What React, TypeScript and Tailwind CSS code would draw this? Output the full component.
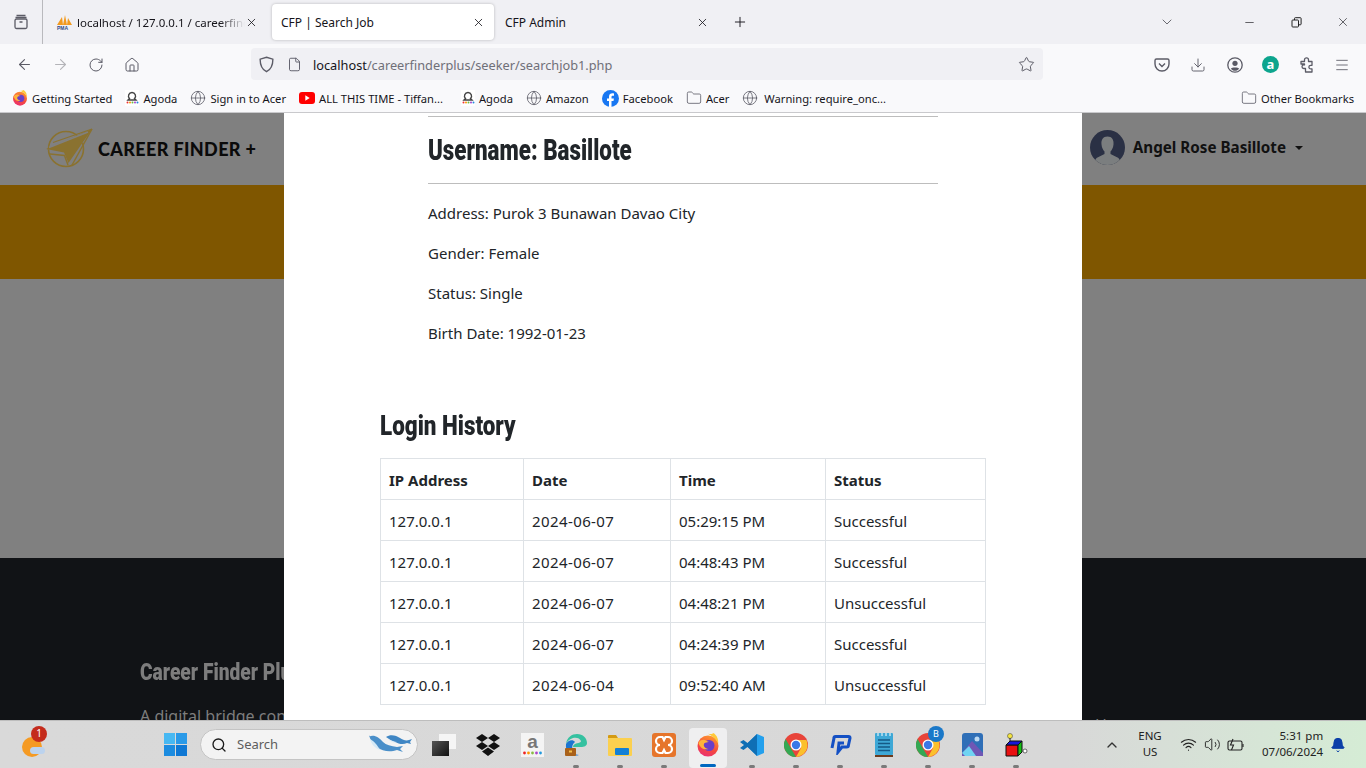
import { ArrowLeft, ArrowRight, RotateCw, Home, File, Star, Download, Menu, Folder, Globe, X, Plus, ChevronDown, Minus, Search, ChevronUp, Wifi, Volume2, Bell } from "lucide-react"

const ui = "font-['Noto_Sans','Open_Sans',sans-serif]"
const heading = "font-['Roboto',sans-serif] font-black whitespace-nowrap origin-left"

const rows = [
    ["127.0.0.1", "2024-06-07", "05:29:15 PM", "Successful"],
    ["127.0.0.1", "2024-06-07", "04:48:43 PM", "Successful"],
    ["127.0.0.1", "2024-06-07", "04:48:21 PM", "Unsuccessful"],
    ["127.0.0.1", "2024-06-07", "04:24:39 PM", "Successful"],
    ["127.0.0.1", "2024-06-04", "09:52:40 AM", "Unsuccessful"],
]

const FirefoxIcon = ({ size = 16 }: { size?: number }) => (
    <svg width={size} height={size} viewBox="0 0 24 24">
        <defs>
            <linearGradient id="ffBody" x1="0.700" y1="0" x2="0.300" y2="1">
                <stop offset="0" stopColor="#ff9a2e" />
                <stop offset="0.600" stopColor="#f4483f" />
                <stop offset="1" stopColor="#ea2f74" />
            </linearGradient>
        </defs>
        <circle cx="12" cy="13" r="10.500" fill="url(#ffBody)" />
        <path d="M12 .8c4 2 8 5 10.200 9.700.3-4-1-8-4.700-10.500 0 0-1.500 1.800-5.500.8z" fill="#ffc93a" />
        <circle cx="13" cy="12.500" r="5.500" fill="#6a3fc8" />
        <path d="M2.500 10c1-2.500 3-3.500 5.500-3.300 2.500.2 2.500 2 5 2.100-2 1.200-4 .2-5 2.200-1 2 1 4.300 4.500 5-4.500 1.200-8.500-1-10-6z" fill="#ffb43a" />
    </svg>
)

const PmaIcon = () => (
    <svg width="17" height="16" viewBox="0 0 17 16">
        <path d="M1 11 6 3l1 8zM7 11l2-10 2 10zM11 11l1-7 4 7z" fill="#f29a1f" />
        <text x="1" y="15.500" fontSize="5" fontWeight="700" fill="#2f4a87" fontFamily="Liberation Sans">PMA</text>
    </svg>
)

const PocketIcon = () => (
    <svg width="16" height="16" viewBox="0 0 16 16" fill="none" stroke="#5b5b66" strokeWidth="1.400">
        <path d="M2.500 2h11A1.500 1.500 0 0 1 15 3.500V7A7 7 0 0 1 1 7V3.500A1.500 1.500 0 0 1 2.500 2z" />
        <path d="m5 6.500 3 3 3-3" />
    </svg>
)

const AccountIcon = () => (
    <svg width="16" height="16" viewBox="0 0 16 16">
        <circle cx="8" cy="8" r="7.200" fill="none" stroke="#5b5b66" strokeWidth="1.300" />
        <circle cx="8" cy="6.300" r="2.600" fill="#5b5b66" />
        <path d="M3.800 11.500c1-1.500 7.400-1.500 8.400 0-1 1.600-2.500 2.300-4.200 2.300s-3.200-.7-4.200-2.300z" fill="#5b5b66" />
    </svg>
)

const ExtensionIcon = () => (
    <svg width="17" height="18" viewBox="0 0 17 18" fill="none" stroke="#5b5b66" strokeWidth="1.300" strokeLinejoin="round">
        <path d="M3 5.500h3.500V3.800a2 2 0 1 1 4 0v1.700H14v3.800h-1.300a1.800 1.800 0 1 0 0 3.600H14V16H7.500v-3.500H5.800a1.800 1.800 0 1 1 0-3.600h.7V8H3z" />
    </svg>
)

const ShieldIcon = () => (
    <svg width="17" height="17" viewBox="0 0 16 16" fill="none" stroke="#5b5b66" strokeWidth="1.300">
        <path d="M8 1.200 14 3c0 6-1.500 9.500-6 11.800C3.500 12.500 2 9 2 3z" />
    </svg>
)

const ColumnsIcon = () => (
    <svg width="16" height="16" viewBox="0 0 16 16" fill="none" stroke="#5b5b66" strokeWidth="1.300">
        <rect x="2" y="5" width="12" height="9.500" rx="1.500" />
        <path d="M3.500 1.500h9M2.500 3.500h11M6.500 8h3" />
    </svg>
)

const RestoreIcon = () => (
    <svg width="11" height="11" viewBox="0 0 11 11" fill="none" stroke="#222" strokeWidth="1">
        <rect x="1" y="3" width="6.500" height="7" rx="0.800" />
        <path d="M3.500 3V1.500a.800.800 0 0 1 .800-.800h5a.800.800 0 0 1 .800.800V7a.800.800 0 0 1-.800.800H7.500" />
    </svg>
)

const AgodaIcon = () => (
    <svg width="14" height="16" viewBox="0 0 14 16">
        <rect width="14" height="16" fill="#fff" />
        <path d="M7 2.500a3.500 3.500 0 0 1 2.500 6L11 10H3l1.500-1.500A3.500 3.500 0 0 1 7 2.500z" fill="none" stroke="#444" strokeWidth="1.400" />
        <circle cx="2.500" cy="12.500" r="1" fill="#e33" /><circle cx="5" cy="12.500" r="1" fill="#f90" /><circle cx="7.500" cy="12.500" r="1" fill="#6b4" /><circle cx="10" cy="12.500" r="1" fill="#a4c" /><circle cx="12.500" cy="12.500" r="1" fill="#28d" />
    </svg>
)

const YoutubeIcon = () => (
    <svg width="16" height="12" viewBox="0 0 16 12">
        <rect width="16" height="12" rx="3" fill="#f00" />
        <path d="m6.300 3.300 4.400 2.700-4.400 2.700z" fill="#fff" />
    </svg>
)

const FacebookIcon = () => (
    <svg width="17" height="17" viewBox="0 0 17 17">
        <circle cx="8.500" cy="8.500" r="8.500" fill="#1877f2" />
        <path d="M9.500 17v-6h2l.400-2.500H9.500V7c0-.800.400-1.300 1.400-1.300H12V3.500c-2.500-.500-5 0-5 3.200v1.800H5V11h2v6z" fill="#fff" />
    </svg>
)

const Mark = ({ children, label, className = "gap-[4px]" }: { children: React.ReactNode; label: string; className?: string }) => (
    <div className={`flex items-center ${className}`}>
        {children}
        <span className="whitespace-nowrap pt-[2px]">{label}</span>
    </div>
)

const Logo = () => (
    <svg width="48" height="42" viewBox="5 6 48 42" fill="none">
        <circle cx="26" cy="27" r="17.500" stroke="#8a7230" strokeWidth="1.600" />
        <path d="M52 7 7 27l17 4.500L28 42z" fill="#808080" />
        <path d="M52 7 6 27l18 3.500L28.500 41z" fill="#8a7230" />
        <path d="M52 7 13 20.500" stroke="#8a7230" strokeWidth="1.200" />
        <path d="M48 10 9 25.500" stroke="#808080" strokeWidth="1.500" />
        <path d="M52 7 31.500 44" stroke="#8a7230" strokeWidth="1.500" />
        <path d="M10 32l14.500 1.500L28 43" stroke="#8a7230" strokeWidth="1.500" />
    </svg>
)

const Avatar = () => (
    <svg width="35" height="35" viewBox="0 0 35 35">
        <circle cx="17.500" cy="17.500" r="17.500" fill="#2a3044" />
        <clipPath id="avatar"><circle cx="17.500" cy="17.500" r="17.500" /></clipPath>
        <g clipPath="url(#avatar)" fill="#7b7e7f">
            <path d="M17.500 6.500c4.500 0 6.500 3.500 6 8-.3 3-1.500 5.500-3 7v2.500l7 3.500c1.500.8 3 2.500 3.500 7.500H4c.5-5 2-6.700 3.500-7.500l7-3.500v-2.500c-1.500-1.500-2.700-4-3-7-.5-4.500 1.500-8 6-8z" />
        </g>
    </svg>
)

const Edge = () => (
    <svg width="24" height="24" viewBox="0 0 24 24">
        <path d="M2 11C3 4 8 1 13 1c6 0 10 4 10 9 0 3-3 4-6 4H9c0-5 8-3 8-6-1-3-5-4-8-3-3 1-6 3-7 6z" fill="#35c1a0" />
        <path d="M2 11c2-4 7-5 9-2-3 2-4 7-1 11 1 1 3 2 5 2C8 24 1 20 2 11z" fill="#1b75d0" />
        <rect x="1" y="15" width="11" height="8" rx="1" fill="#a9611a" />
        <rect x="5" y="17.500" width="3" height="2" fill="#f3c04c" />
    </svg>
)

const FolderColor = () => (
    <svg width="24" height="22" viewBox="0 0 24 22">
        <path d="M0 2a1 1 0 0 1 1-1h7l2 3H0z" fill="#d49a12" />
        <rect y="4" width="24" height="18" rx="1" fill="#fbd04f" />
        <rect x="7" y="14" width="14" height="7" rx="1" fill="#1380d6" />
    </svg>
)

const Xampp = () => (
    <svg width="24" height="24" viewBox="0 0 24 24" fill="none">
        <rect width="24" height="24" rx="3" fill="#e6752b" />
        <path d="M8 4h2.500L12 7l1.500-3H16a4 4 0 0 1 0 8 4 4 0 0 1 0 8h-2.500L12 17l-1.500 3H8a4 4 0 0 1 0-8 4 4 0 0 1 0-8z" stroke="#fff" strokeWidth="2.200" />
    </svg>
)

const Vscode = () => (
    <svg width="24" height="24" viewBox="0 0 24 24">
        <path d="M17 1 24 4v16l-7 3L6 12z" fill="#24a0ed" />
        <path d="M17 1v22L7.500 14l-4 3L0 15l4-3-4-3 3.500-2 4 3z" fill="#0f6fb5" />
    </svg>
)

const ChromeIcon = ({ size = 24 }: { size?: number }) => (
    <svg width={size} height={size} viewBox="0 0 24 24">
        <circle cx="12" cy="12" r="12" fill="#e8443a" />
        <path d="M1.600 6 12 24a12 12 0 0 1-10.400-18z" fill="#34a853" />
        <path d="M12 7h10.400A12 12 0 0 1 12 24l5-9z" fill="#fbc02d" />
        <circle cx="12" cy="12" r="5.500" fill="#fff" />
        <circle cx="12" cy="12" r="4.200" fill="#3b78e7" />
    </svg>
)

const ChatBlue = () => (
    <svg width="23" height="20" viewBox="0 0 23 20" fill="none" stroke="#1450c4" strokeWidth="3">
        <path d="M3 13 5 3a1.500 1.500 0 0 1 1.500-1.500h13A1.500 1.500 0 0 1 21 3l-1.500 7a2 2 0 0 1-2 2H13l-4 5 1-9h5" />
    </svg>
)

const Notepad = () => (
    <svg width="18" height="24" viewBox="0 0 18 24">
        <rect width="18" height="22" y="0" rx="1" fill="#3ea8d6" />
        <rect y="22" width="18" height="2" fill="#6b3b1e" />
        <path d="M3 7h12M3 10.500h12M3 14h12M3 17.500h12" stroke="#155a86" strokeWidth="1.500" />
        <path d="M3 0v3M7 0v3M11 0v3M15 0v3" stroke="#fff" strokeWidth="1" />
    </svg>
)

const Photos = () => (
    <svg width="21" height="23" viewBox="0 0 21 23">
        <rect width="21" height="23" rx="3" fill="#2f6fb7" />
        <circle cx="15" cy="6" r="2.500" fill="#bcd9f2" />
        <path d="M0 20 10 8l11 12v3H0z" fill="#6f57b5" />
        <path d="M0 20 7 13l7 10H3z" fill="#6fd3f2" />
    </svg>
)

const Cube = () => (
    <svg width="24" height="24" viewBox="0 0 24 24">
        <circle cx="6" cy="3" r="2.500" fill="#f5e642" stroke="#333" strokeWidth="0.500" />
        <path d="M6 5v5" stroke="#222" />
        <path d="M2 12h12v11H2z" fill="#e81010" stroke="#111" />
        <path d="M2 12l4-4h12l-4 4z" fill="#1616d8" stroke="#111" />
        <path d="M14 12l4-4v11l-4 4z" fill="#16c016" stroke="#111" />
        <circle cx="21" cy="18" r="2" fill="#fff" stroke="#333" strokeWidth="0.700" />
    </svg>
)

const Dropbox = () => (
    <svg width="24" height="22" viewBox="0 0 24 22" fill="#111">
        <path d="M6 0 0 4l6 4 6-4zM18 0l-6 4 6 4 6-4zM0 12l6 4 6-4-6-4zM24 12l-6 4-6-4 6-4zM6 17.500 12 22l6-4.500-6-4z" />
    </svg>
)

const Amazon = () => (
    <svg width="23" height="24" viewBox="0 0 23 24">
        <rect width="23" height="24" fill="#f4f4f4" />
        <text x="11.500" y="15" textAnchor="middle" fontSize="19" fontWeight="700" fill="#777" fontFamily="Liberation Sans">a</text>
        <circle cx="3.500" cy="20" r="1.400" fill="#e22" /><circle cx="7.500" cy="20" r="1.400" fill="#f90" /><circle cx="11.500" cy="20" r="1.400" fill="#8b4" /><circle cx="15.500" cy="20" r="1.400" fill="#a4c" /><circle cx="19.500" cy="20" r="1.400" fill="#29d" />
    </svg>
)

const Whales = () => (
    <svg width="46" height="24" viewBox="8 8 46 24" className="ml-auto">
        <path d="M27 12c4-3 10-2 14 1 3 2 6 3 9 2l3-1-2 3 1 2-4-1c-4 2-8 1-12-1-3-1-6-3-9-5z" fill="#3f86c4" />
        <path d="M10 12C14 9 20 12 24 17c3 3 8 4 14 5l6-1-3 3 3 3-6-2c-6 2-14 2-20-3-4-3-7-7-8-12z" fill="#4a8fc9" />
        <path d="M11 14c1 5 5 9 10 11-2-4-6-9-10-11z" fill="#d5e9f6" />
        <path d="M29 14c3 2 6 3 9 3-3 1-6 0-9-3z" fill="#d5e9f6" />
    </svg>
)

const TaskIcon = ({ children, active, dot = true }: { children: React.ReactNode; active?: boolean; dot?: boolean }) => (
    <div className="relative flex h-[38px] w-9 items-center justify-center">
        {active && <span className="absolute inset-x-[-1px] bottom-[-4px] top-[2px] rounded-[4px] bg-[#efeff0]" />}
        <div className="relative flex items-center justify-center">{children}</div>
        {dot && !active && <span className="absolute bottom-[-4px] h-[3px] w-[6px] rounded-full bg-[#7a7a7a]" />}
        {active && <span className="absolute bottom-[-3px] h-[3px] w-[16px] rounded-full bg-[#0067c0]" />}
    </div>
)

export default function App() {
    return (
        <div className={`flex h-[768px] w-[1366px] flex-col overflow-hidden bg-white ${ui}`}>
            <div className="flex h-[44px] shrink-0 items-center bg-[#f0f0f4] text-[12px] text-[#15141a]">
                <div className="flex h-full w-[43px] items-center justify-center border-r border-[#b9b9bd]">
                    <ColumnsIcon />
                </div>
                <div className="flex w-[229px] items-center pl-[13px]">
                    <PmaIcon />
                    <span className="ml-[4px] w-[168px] overflow-hidden whitespace-nowrap pt-[2px] text-[11.500px] [mask-image:linear-gradient(90deg,#000_85%,transparent)]">localhost / 127.0.0.1 / careerfinderplus</span>
                    <X size={13} strokeWidth={1.5} />
                </div>
                <div className="flex h-[36px] w-[222px] items-center justify-between rounded-[4px] bg-white pl-[9px] pr-[9px] shadow-[0_0_3px_rgba(0,0,0,0.25)]">
                    <span className="pt-[2px]">CFP | Search Job</span>
                    <X size={13} strokeWidth={1.5} />
                </div>
                <div className="flex w-[221px] items-center justify-between pl-[11px] pr-[6px]">
                    <span className="pt-[2px]">CFP Admin</span>
                    <X size={13} strokeWidth={1.5} />
                </div>
                <Plus size={16} strokeWidth={1.4} className="ml-[17px]" />
                <ChevronDown size={16} strokeWidth={1.3} className="ml-[411px] text-[#55555c]" />
                <Minus size={13} strokeWidth={1.2} className="ml-[68px]" />
                <div className="ml-[35px]"><RestoreIcon /></div>
                <X size={14} strokeWidth={1.1} className="ml-[34px]" />
            </div>

            <div className="flex h-[41px] shrink-0 items-center bg-[#f9f9fb] text-[#5b5b66]">
                <ArrowLeft size={17} strokeWidth={1.5} className="ml-[16px]" />
                <ArrowRight size={17} strokeWidth={1.5} className="ml-[19px] text-[#b4b4b8]" />
                <RotateCw size={16} strokeWidth={1.5} className="ml-[19px]" />
                <Home size={16} strokeWidth={1.5} className="ml-[20px]" />
                <div className="mb-[1px] ml-[111px] flex h-[32px] w-[792px] items-center rounded-[4px] bg-[#f0f0f4] pl-[7px] pr-[8px]">
                    <ShieldIcon />
                    <File size={15} strokeWidth={1.5} className="ml-[12px]" />
                    <span className="ml-[11px] pt-[4px] text-[12.750px]"><span className="text-[#15141a]">localhost</span><span className="text-[#6f6f78]">/careerfinderplus/seeker/searchjob1.php</span></span>
                    <Star size={17} strokeWidth={1.4} className="ml-auto" />
                </div>
                <div className="ml-[111px]"><PocketIcon /></div>
                <Download size={16} strokeWidth={1.4} className="ml-[20px]" />
                <div className="ml-[21px]"><AccountIcon /></div>
                <div className="ml-[19px] flex h-[17px] w-[17px] items-center justify-center rounded-full bg-[#0da58e] text-[13px] font-bold leading-none text-white">a</div>
                <div className="ml-[19px]"><ExtensionIcon /></div>
                <Menu size={16} strokeWidth={1.3} className="ml-[19px]" />
            </div>

            <div className="flex h-[28px] shrink-0 items-center border-b border-[#c9c9cc] bg-[#f9f9fb] pl-[12px] pr-[12px] text-[11.200px] text-[#15141a]">
                <div className="flex items-center gap-[13px]">
                    <Mark label="Getting Started"><FirefoxIcon /></Mark>
                    <Mark label="Agoda"><AgodaIcon /></Mark>
                    <Mark label="Sign in to Acer"><Globe size={16} strokeWidth={1.2} className="text-[#5b5b66]" /></Mark>
                    <Mark label="ALL THIS TIME - Tiffan..." className="mr-[5px] gap-[4px]"><YoutubeIcon /></Mark>
                    <Mark label="Agoda"><AgodaIcon /></Mark>
                    <Mark label="Amazon"><Globe size={16} strokeWidth={1.2} className="text-[#5b5b66]" /></Mark>
                    <Mark label="Facebook"><FacebookIcon /></Mark>
                    <Mark label="Acer"><Folder size={16} strokeWidth={1.2} className="text-[#5b5b66]" /></Mark>
                    <Mark label="Warning: require_onc..." className="gap-[6px]"><Globe size={16} strokeWidth={1.2} className="text-[#5b5b66]" /></Mark>
                </div>
                <div className="ml-auto">
                    <Mark label="Other Bookmarks"><Folder size={16} strokeWidth={1.2} className="text-[#5b5b66]" /></Mark>
                </div>
            </div>

            <div className="relative flex h-[607px] shrink-0 flex-col overflow-hidden bg-[#808080]">
                <div className="flex h-[72px] shrink-0 items-center justify-between bg-[#808080]">
                    <div className="ml-[45px] flex items-center gap-[5px]">
                        <Logo />
                        <span className="font-['Lato',sans-serif] text-[18px] font-black tracking-[0.370px] text-[#0a0a0a]">CAREER FINDER +</span>
                    </div>
                    <div className="mb-[3px] mr-[63px] flex items-center gap-[8px]">
                        <Avatar />
                        <span className="text-[15.200px] font-bold text-[#111]">Angel Rose Basillote</span>
                        <span className="ml-[1px] h-0 w-0 border-x-[4px] border-t-[4px] border-x-transparent border-t-[#111]" />
                    </div>
                </div>
                <div className="h-[94px] shrink-0 bg-[#7f5600]" />
                <div className="h-[279px] shrink-0" />
                <div className="flex h-[162px] shrink-0 bg-[#111316] text-[#7d7d7d]">
                    <div className="ml-[140px] w-[955px] pt-[97px]">
                        <h4 className={`${heading} scale-x-[0.8] text-[24px] leading-[34px]`}>Career Finder Plus</h4>
                        <p className="mt-[15px] whitespace-nowrap text-[16px]">A digital bridge connecting job seekers</p>
                    </div>
                    <p className="pt-[155px] text-[16px]">Home</p>
                </div>

                <div className="absolute inset-y-0 left-[284px] flex w-[798px] flex-col items-center bg-white text-[#212529]">
                    <div className="mt-[3px] w-[510px]">
                        <div className="h-px bg-[#bdbdbd]" />
                        <h2 className={`${heading} mt-[16px] scale-x-[0.745] text-[30px] leading-[34px]`}>Username: Basillote</h2>
                        <div className="mt-[16px] h-px bg-[#bdbdbd]" />
                        <div className="mt-[17px] flex flex-col gap-[16px] text-[15px] leading-[24px]">
                            <p>Address: Purok 3 Bunawan Davao City</p>
                            <p>Gender: Female</p>
                            <p>Status: Single</p>
                            <p>Birth Date: 1992-01-23</p>
                        </div>
                    </div>
                    <div className="mt-[64px] w-[606px]">
                        <h3 className={`${heading} scale-x-[0.8] text-[28px] leading-[34px]`}>Login History</h3>
                        <table className="mt-[15px] w-[605px] table-fixed border-collapse text-[15px]">
                            <colgroup>
                                <col className="w-[143px]" /><col className="w-[147px]" /><col className="w-[155px]" /><col className="w-[160px]" />
                            </colgroup>
                            <thead>
                                <tr className="h-[41px] text-left">
                                    {["IP Address", "Date", "Time", "Status"].map(h => (
                                        <th key={h} className="border border-[#dee2e6] px-[8px] pt-[2px] font-bold">{h}</th>
                                    ))}
                                </tr>
                            </thead>
                            <tbody>
                                {rows.map((row, i) => (
                                    <tr key={i} className="h-[41px]">
                                        {row.map((cell, j) => (
                                            <td key={j} className={`border border-[#dee2e6] px-[8px] pt-[2px] ${j === 1 ? "tracking-[0.400px]" : ""}`}>{cell}</td>
                                        ))}
                                    </tr>
                                ))}
                            </tbody>
                        </table>
                    </div>
                </div>
            </div>

            <div className="flex h-[48px] shrink-0 items-center border-t border-[#bdbdbd] bg-[linear-gradient(90deg,#d9d9d9_0%,#d8d8d8_78%,#d5ecd5_100%)]">
                <div className="relative ml-[22px] h-[22px] w-[22px]">
                    <div className="absolute left-0 top-[3px] h-[20px] w-[20px] rounded-full bg-[#f59a23]" />
                    <div className="absolute left-[8px] top-[13px] h-[7px] w-[15px] rounded-full bg-[#bcd3ee]" />
                    <div className="absolute left-[9px] top-[-8px] flex h-[16px] w-[16px] items-center justify-center rounded-full bg-[#c42b1c] text-[10px] text-white">1</div>
                </div>
                <svg width="23" height="23" viewBox="0 0 23 23" className="ml-[120px]">
                    <rect width="11" height="11" fill="#47b8f2" /><rect x="12" width="11" height="11" fill="#2a9ae8" /><rect y="12" width="11" height="11" fill="#1c8ce0" /><rect x="12" y="12" width="11" height="11" fill="#0f78d4" />
                </svg>
                <div className="ml-[13px] flex h-[31px] w-[218px] items-center rounded-full border border-[#c4c4c4] bg-[#f3f3f3] pl-[10px] pr-[4px] text-[13px] text-[#5d5d5d]">
                    <Search size={16} strokeWidth={2} className="text-[#1a1a1a]" />
                    <span className="ml-[10px]">Search</span>
                    <Whales />
                </div>
                <div className="ml-[8px] flex items-center gap-[8px]">
                    <TaskIcon dot={false}>
                        <div className="relative h-[22px] w-[24px]">
                            <div className="absolute right-0 top-0 h-[15px] w-[17px] bg-[#f5f5f5]" />
                            <div className="absolute bottom-0 left-0 h-[15px] w-[17px] bg-[linear-gradient(135deg,#555,#111)]" />
                        </div>
                    </TaskIcon>
                    <TaskIcon dot={false}><Dropbox /></TaskIcon>
                    <TaskIcon dot={false}><Amazon /></TaskIcon>
                    <TaskIcon><Edge /></TaskIcon>
                    <TaskIcon><FolderColor /></TaskIcon>
                    <TaskIcon><Xampp /></TaskIcon>
                    <TaskIcon active><FirefoxIcon size={24} /></TaskIcon>
                    <TaskIcon><Vscode /></TaskIcon>
                    <TaskIcon><ChromeIcon /></TaskIcon>
                    <TaskIcon><ChatBlue /></TaskIcon>
                    <TaskIcon><Notepad /></TaskIcon>
                    <TaskIcon>
                        <ChromeIcon />
                        <span className="absolute right-[-4px] top-[-7px] flex h-[16px] w-[16px] items-center justify-center rounded-full bg-[#1a78c8] text-[9px] text-white">B</span>
                    </TaskIcon>
                    <TaskIcon><Photos /></TaskIcon>
                    <TaskIcon><Cube /></TaskIcon>
                </div>
                <ChevronUp size={16} strokeWidth={2} className="ml-[70px] text-[#333]" />
                <div className="ml-[16px] flex w-[28px] -translate-y-px flex-col items-center text-[11.500px] leading-[16px] text-[#222]">
                    <span>ENG</span>
                    <span>US</span>
                </div>
                <Wifi size={17} strokeWidth={1.6} className="ml-[16px] text-[#222]" />
                <Volume2 size={17} strokeWidth={1.3} className="ml-[7px] text-[#222]" />
                <svg width="18" height="14" viewBox="0 0 18 14" fill="none" stroke="#222" strokeWidth="1.100" className="ml-[6px]">
                    <rect x="1" y="3" width="14" height="9" rx="1.500" />
                    <path d="M16 6v3" />
                    <path d="M6 1 3.500 7h3L4.500 12" />
                </svg>
                <div className="ml-[17px] flex -translate-y-px flex-col items-end text-[11.500px] leading-[16px] text-[#222]">
                    <span>5:31 pm</span>
                    <span>07/06/2024</span>
                </div>
                <Bell size={16} fill="#0b3fa8" strokeWidth={1.5} className="ml-[7px] text-[#0b3fa8]" />
            </div>
        </div>
    )
}
